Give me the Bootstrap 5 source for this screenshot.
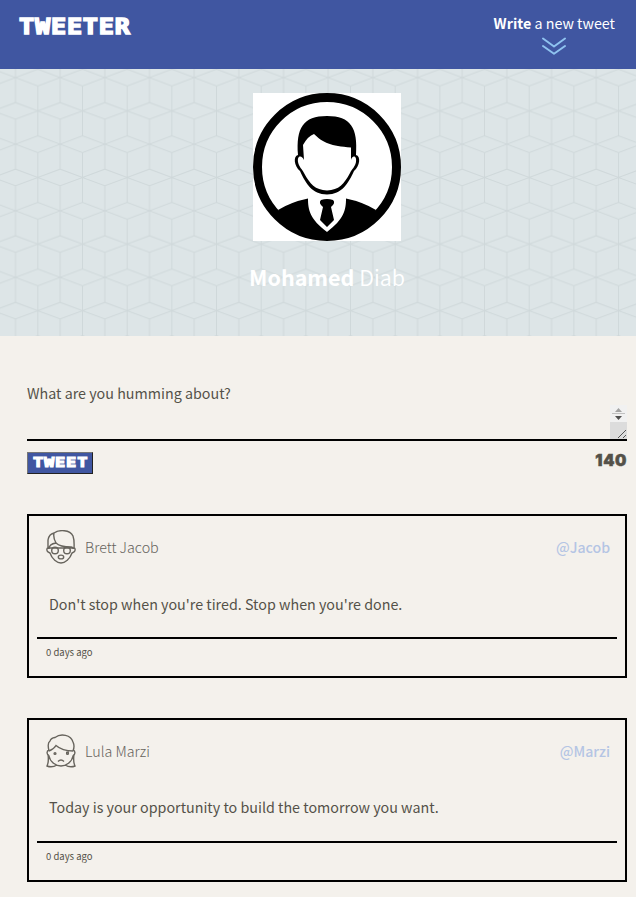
<!DOCTYPE html>
<html lang="en">
<head>
<meta charset="utf-8">
<meta name="viewport" content="width=device-width, initial-scale=1">
<title>Tweeter</title>
<link rel="stylesheet" href="https://cdn.jsdelivr.net/npm/bootstrap@5.3.0/dist/css/bootstrap.min.css">
<style>
  body { background: #f4f1ec; color: #545149; font-family: "Noto Sans CJK SC", sans-serif; font-size: 14.3px; line-height: 24px; overflow: hidden; }
  .topbar { height: 69px; background: #4056a1; padding: 11px 21px 0 18px; }
  .chunky { font-family: "DejaVu Sans Mono", monospace; font-weight: 700; line-height: 1; -webkit-text-stroke: 1.5px currentColor; }
  .brand { font-size: 21.5px; color: #fff; padding: 5px 0 0 1px; }
  .brand span, .tweet-btn span { display: inline-block; transform: scaleX(1.17); transform-origin: left; letter-spacing: .7px; }
  .compose-link { color: #fff; font-size: 14.3px; }
  .compose-link svg { margin-top: 2px; }
  .profile { height: 267px; background: #dde5e7; color: #fff; padding: 24px 0 0 18px; }
  .profile .cubes { inset: 0; }
  .profile h2 { font-size: 21.5px; line-height: 30px; margin-top: 21px; font-weight: 350; }
  .profile strong { font-weight: 700; }
  .feed { padding: 45px 9px 0 27px; }
  .compose textarea { height: 60px; background: transparent; border-bottom: 2px solid #000 !important; resize: none; color: inherit; outline: 0; }
  .compose textarea::placeholder { color: #545149; opacity: 1; }
  .grip { right: 0; bottom: 2px; }
  .compose-bar { padding-top: 11px; }
  .tweet-btn { background: #4056a1; color: #fff; border: 1px solid; border-color: #767676 #212121 #212121 #767676; width: 66px; height: 22px; font-size: 14.5px; -webkit-text-stroke-width: 1.2px; padding: 0 0 2px 5px; text-align: left; }
  .counter { font-family: Inter, sans-serif; font-weight: 900; font-size: 16px; letter-spacing: .6px; -webkit-text-stroke-width: .5px; }
  .tweets { margin-top: 40px; gap: 40px; }
  .tweet { height: 164px; border: 2px solid #000; padding: 14px 8px 0; }
  .tweet header { padding: 0 7px 0 9px; height: 34px; }
  .tweet .who { font-weight: 300; margin-left: 9px; color: #66635c; }
  .tweet .handle { color: #b4c5e4; font-weight: 500; font-size: 14.1px; }
  .tweet p { height: 75px; padding: 27px 12px 0; border-bottom: 2px solid #000; }
  .tweet:first-child p { padding-top: 28px; }
  .tweet footer { font-size: 9.5px; line-height: 14px; padding: 6px 9px; }
</style>
<script src="https://cdn.jsdelivr.net/npm/bootstrap@5.3.0/dist/js/bootstrap.bundle.min.js"></script>
</head>
<body>
<nav class="topbar d-flex justify-content-between align-items-start">
  <div class="brand chunky"><span>TWEETER</span></div>
  <div class="compose-link d-flex flex-column align-items-center">
    <div class="write"><strong>Write</strong> a new tweet</div>
    <svg width="26" height="18" viewBox="0 0 26 18" fill="none" stroke="#8fc3f0" stroke-width="2" stroke-linecap="round" stroke-linejoin="round"><path d="M2 1.500 13 9.500 24 1.500M2 9 13 16.700 24 9"/></svg>
  </div>
</nav>
<header class="profile position-relative text-center">
  <svg class="cubes position-absolute w-100 h-100" aria-hidden="true">
    <defs>
      <pattern id="cubes" x="15.5" y="8.6" width="44.67" height="66.6" patternUnits="userSpaceOnUse">
        <path d="M0 0 22.33-8.3 44.67 0 22.33 8.3ZM0 66.6 22.33 58.3 44.67 66.6M22.33 8.3V58.3M0 0V25M0 41.6V66.6M44.67 0V25M44.67 41.6V66.6M-22.33 33.3 0 25 22.33 33.3 44.67 25 67 33.3M0 41.6 22.33 33.3 44.67 41.6" fill="none" stroke="#cfd8da" stroke-width="1"/>
      </pattern>
    </defs>
    <rect width="100%" height="100%" fill="url(#cubes)"/>
  </svg>
  <svg class="position-relative d-block mx-auto" width="148" height="148" viewBox="0 0 148 148">
    <path fill="#fff" d="M0 0h148v148H0z"/>
    <circle cx="74" cy="74" r="69.5" fill="none" stroke="#000" stroke-width="9"/>
    <path d="M25 117Q38 109 55 105.500C55 117 57 126 74 139 91 126 93 117 93 105.500Q110 109 123 117L119 124A67 67 0 0 1 29 124Z"/>
    <path d="M68 107Q74 105 80 107 83 110 78 114L81 127 74 134 67 127 70 114Q65 110 68 107Z"/>
    <path d="M45 62C43 35 50 23 74 23S105 35 103 62C108 63 107 73 101 78 95 91 89 101 74 101.500 59 101 53 91 47 78 41 73 40 63 45 62Z"/>
    <path fill="#fff" d="M50 52Q55 43 61 41C70 50 78 53 98 54.500V67C99 62 104 62 103 69 102 74 99 76 97 80 91 91 86 97 74 97.500 62 97 57 91 51 80 49 76 46 74 45 69 44 62 49 62 51 67Z"/>
  </svg>
  <h2 class="position-relative mb-0"><strong>Mohamed</strong> Diab</h2>
</header>
<main class="feed">
  <form class="compose">
    <div class="position-relative">
      <textarea class="d-block w-100 border-0 p-0" placeholder="What are you humming about?" aria-label="Tweet text"></textarea>
      <svg class="grip position-absolute" width="17" height="34" viewBox="0 0 17 34"><path fill="#f1f1f1" d="M0 0h17v17H0z"/><path fill="#dcdcdc" d="M0 17h17v17H0z"/><path fill="#a3a3a3" d="M8.500 3 12 7H5Z"/><path fill="#505050" d="M5 11h7l-3.500 4Z"/><path d="M2 8.500H15" stroke="#c1c1c1"/><path d="M8 33 16 25M13 33 16 30" stroke="#555"/></svg>
    </div>
    <div class="compose-bar d-flex justify-content-between align-items-start">
      <button type="button" class="tweet-btn chunky"><span>TWEET</span></button>
      <output class="counter chunky">140</output>
    </div>
  </form>
  <section class="tweets d-flex flex-column">
    <article class="tweet">
      <header class="d-flex align-items-center">
        <svg width="30" height="34" viewBox="0 0 30 34" fill="none" stroke="#67645d" stroke-width="1.400"><path d="M2 19V10Q3 4 8 3C13-.5 24-.5 27 6Q28.500 10 28 19M8 3Q7 8 10 13 3 14 3 19M10 13C14 17 20 17 25 17Q27 17 27 19M3 18C1 17 0 20 2 22L4 23C6 29 11 33 15 33S24 29 26 23L28 22C30 20 29 17 27 18M3 18H27"/><circle cx="9" cy="20.500" r="3.300"/><circle cx="21" cy="20.500" r="3.300"/><ellipse cx="15" cy="27" rx="2.700" ry="1.900"/></svg>
        <span class="who">Brett Jacob</span>
        <span class="handle ms-auto">@Jacob</span>
      </header>
      <p class="mb-0">Don't stop when you're tired. Stop when you're done.</p>
      <footer>0 days ago</footer>
    </article>
    <article class="tweet">
      <header class="d-flex align-items-center">
        <svg width="30" height="34" viewBox="0 0 30 34" fill="none" stroke="#67645d" stroke-width="1.400"><path d="M3 17Q1 9 4 7 5 4 9 3.500C15-1 25 1 27 8Q29 12 27 17M3 17Q8 15 10 11.500C14 15 20 17 27 17M3 16C0 17 1 21 3 22 4 28 10 32 15 32S26 28 27 22C29 21 30 17 27 16M2 20Q3 28 1 32 6 34 11 31M28 20Q27 28 29 32 24 34 19 31M12 27.500Q15 24.500 18 27.500M20 18.500 23 18"/><circle cx="9" cy="19.500" r=".9"/><circle cx="21.500" cy="19.500" r=".9"/></svg>
        <span class="who">Lula Marzi</span>
        <span class="handle ms-auto">@Marzi</span>
      </header>
      <p class="mb-0">Today is your opportunity to build the tomorrow you want.</p>
      <footer>0 days ago</footer>
    </article>
  </section>
</main>
</body>
</html>
